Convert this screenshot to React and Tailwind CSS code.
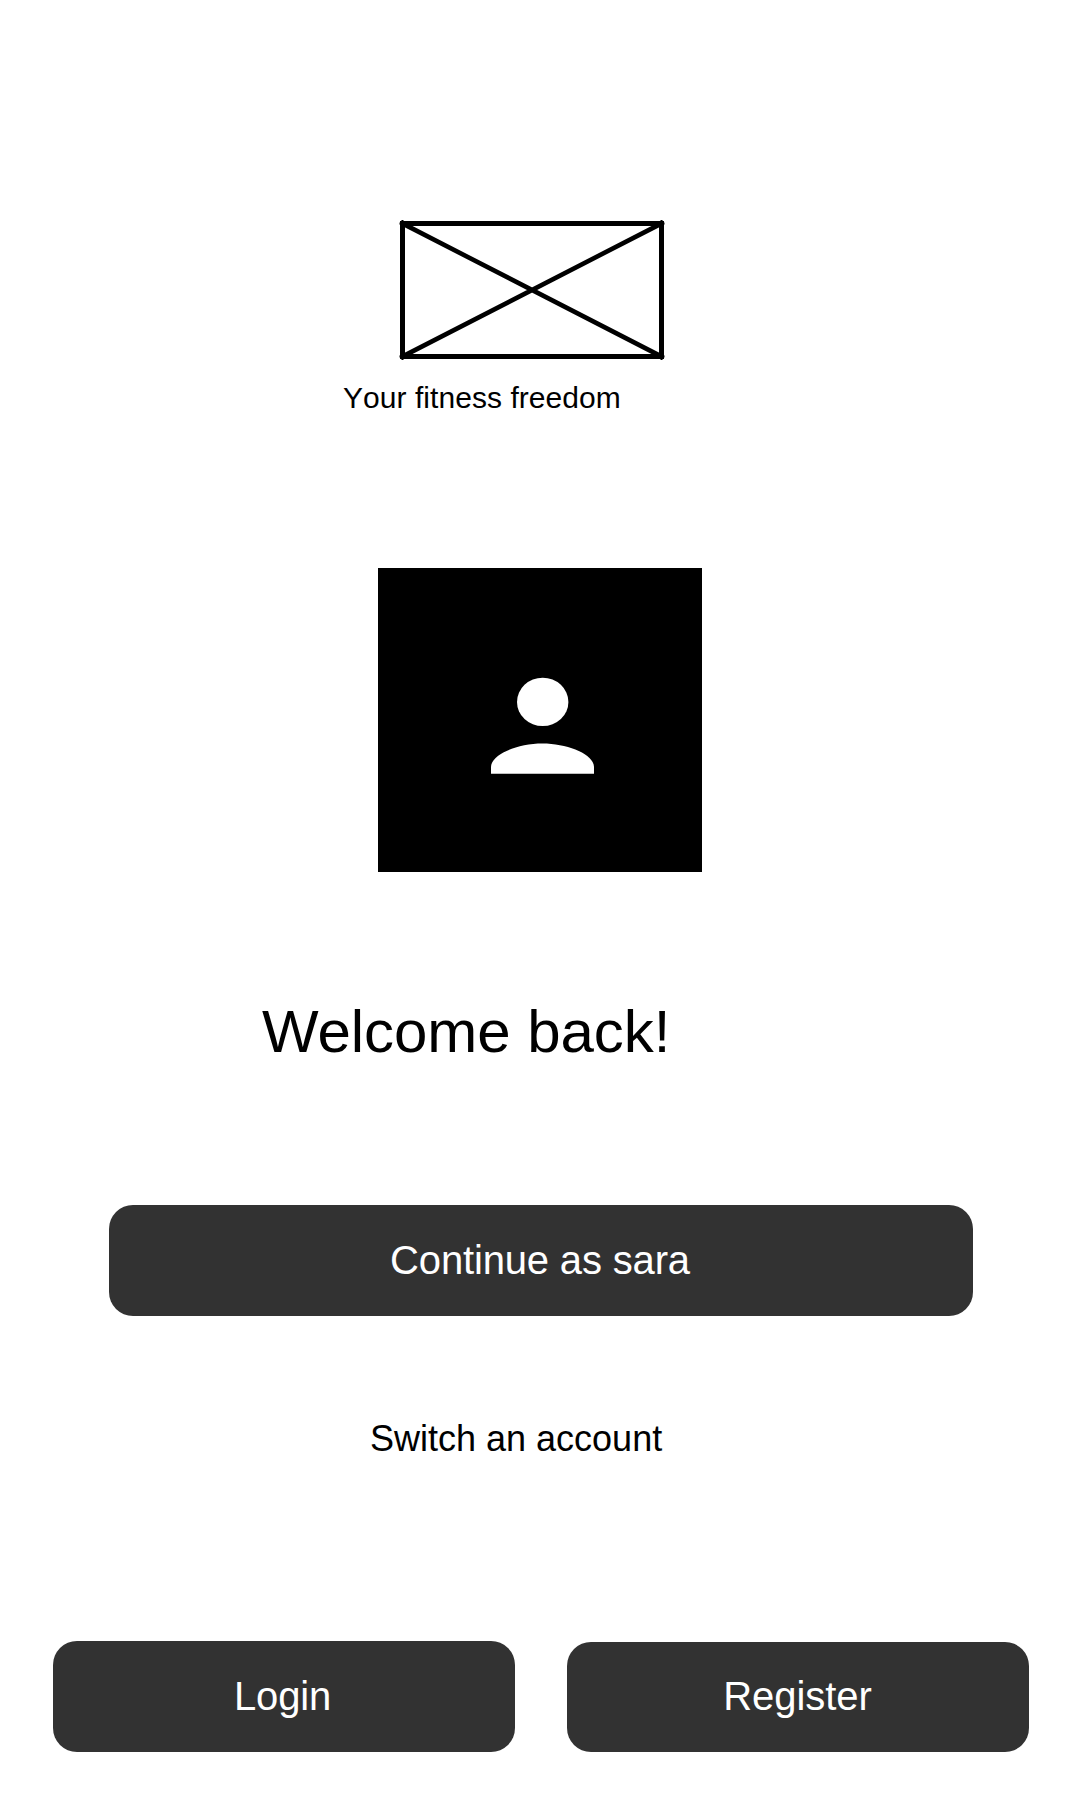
function Button({ children, className }) {
  return (
    <button
      type="button"
      className={`flex items-center justify-center whitespace-nowrap rounded-[24px] bg-[#323232] pb-[2px] text-[40px] leading-[48px] text-white ${className}`}
    >
      {children}
    </button>
  );
}

function LogoPlaceholder() {
  return (
    <svg className="ml-[398px] block h-[142px] w-[268px]" viewBox="398 219 268 142" fill="none" stroke="black">
      <rect x="402.5" y="223.5" width="259" height="133" strokeWidth="5" />
      <path d="M400.8 222.6L663.2 357.4M663.2 222.6L400.8 357.4" strokeWidth="4.6" />
      <path
        d="M402.5 220V226M399.5 223.5H405M661.5 220V226M659 223.5H664.5M402.5 354V360M399.5 356.5H405M661.5 354V360M659 356.5H664.5"
        strokeWidth="2"
      />
    </svg>
  );
}

function Avatar() {
  return (
    <div className="ml-[378px] mt-[152px] h-[304px] w-[324px] bg-black">
      <svg className="block h-full w-full" viewBox="0 0 324 304" fill="white">
        <ellipse cx="164.7" cy="133.9" rx="25.7" ry="24.2" />
        <path d="M113 205.8V199C113 186.5 139 175.5 164.5 175.5S216 186.5 216 199V205.8Z" />
      </svg>
    </div>
  );
}

export default function App() {
  return (
    <main className="flex h-[1800px] w-[1080px] flex-col items-start bg-white pt-[219px] font-['Liberation_Sans',Arial,sans-serif] text-black">
      <LogoPlaceholder />
      <p className="ml-[343px] mt-[19px] h-9 whitespace-nowrap text-[30px] leading-9 tracking-[0.05px] [font-kerning:none]">
        Your fitness freedom
      </p>
      <Avatar />
      <h1 className="ml-[262px] mt-[124px] h-[72px] whitespace-nowrap text-[60px] leading-[72px] tracking-[-0.05px]">
        Welcome back!
      </h1>
      <Button className="ml-[109px] mt-[137px] h-[111px] w-[864px] pr-[2px] tracking-[-0.16px]">Continue as sara</Button>
      <a className="ml-[370px] mt-[101px] h-11 whitespace-nowrap text-[36px] leading-[44px]">Switch an account</a>
      <div className="ml-[53px] mt-[180px] flex items-end gap-[52px]">
        <Button className="h-[111px] w-[462px] pr-[3px] tracking-[-0.15px]">Login</Button>
        <Button className="h-[110px] w-[462px] pr-[1px] tracking-[-0.05px]">Register</Button>
      </div>
    </main>
  );
}
